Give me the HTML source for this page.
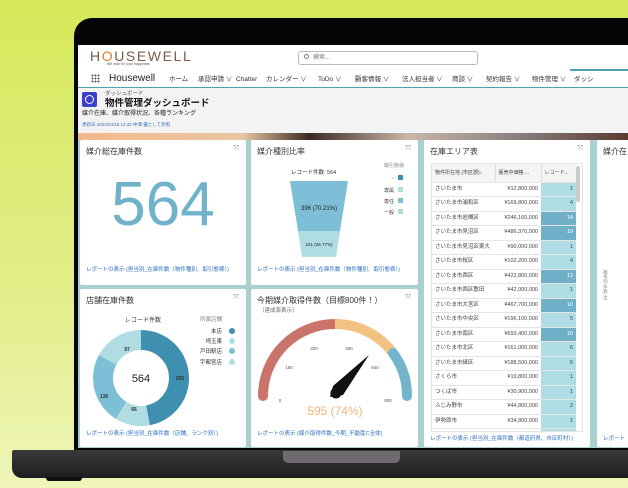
<!DOCTYPE html>
<html><head><meta charset="utf-8"><style>
*{margin:0;padding:0;box-sizing:border-box}
body{width:628px;height:488px;overflow:hidden;position:relative;font-family:"Liberation Sans","Noto Sans CJK JP",sans-serif;background:linear-gradient(180deg,#d6e85a 0%,#e2ee8a 60%,#eef5b8 100%)}
.a{position:absolute;line-height:1.2}
.card{position:absolute;background:#fff;border-radius:2px}
.ct{position:absolute;left:6px;top:7px;font-size:8px;color:#333;line-height:1.2}
.ex{position:absolute;right:7px;top:5px;font-size:7px;color:#888}
.lk{position:absolute;left:6px;font-size:5.5px;color:#2e6fc4;white-space:nowrap;line-height:1.2}
.nav span{position:absolute;top:76px;font-size:6.5px;line-height:8px;color:#333;white-space:nowrap}
table{border-collapse:collapse;font-size:5.5px;color:#444}
td{height:14.5px;border-bottom:1px solid #e4e4e4;padding:0 3px;white-space:nowrap}
</style></head><body>
<div class="a" style="left:74px;top:18px;width:580px;height:436px;background:#050505;border-radius:18px 0 0 0"></div>
<div class="a" style="left:12px;top:450px;width:616px;height:28px;background:linear-gradient(180deg,#3a3a3c,#1e1e20);border-radius:2px 0 0 10px"></div>
<div class="a" style="left:283px;top:451px;width:117px;height:12px;background:#6e6a70;border-radius:0 0 5px 5px"></div>
<div class="a" style="left:46px;top:477px;width:36px;height:4px;background:#111;border-radius:0 0 3px 3px"></div>
<div class="a" style="left:78px;top:45px;width:550px;height:403px;background:#a9cfcf;overflow:hidden"></div>
<div class="a" style="left:78px;top:45px;width:550px;height:43px;background:#fff"></div>
<div class="a" style="left:90px;top:48px;font-size:14px;letter-spacing:1.6px;color:#7b5a4c">H<span style="color:#e07a2c">O</span>USEWELL</div>
<div class="a" style="left:107px;top:62px;font-size:3.5px;color:#555">We wish for your happiness</div>
<div class="a" style="left:298px;top:51px;width:180px;height:14px;border:1px solid #bbb;border-radius:3px;font-size:6px;color:#777;padding:3px 0 0 14px">検索...</div>
<div class="a" style="left:304px;top:54px;width:5px;height:5px;border:1px solid #777;border-radius:50%"></div>
<div class="a" style="left:91px;top:74px;width:9px;height:9px;background-image:radial-gradient(circle,#555 0.9px,transparent 1.1px);background-size:3px 3px"></div>
<div class="a" style="left:109px;top:73px;font-size:10px;color:#222">Housewell</div>
<div class="nav">
<span style="left:169px">ホーム</span><span style="left:198px">承認申請 ∨</span><span style="left:236px">Chatter</span><span style="left:266px">カレンダー ∨</span><span style="left:318px">ToDo ∨</span><span style="left:355px">顧客情報 ∨</span><span style="left:402px">法人担当者 ∨</span><span style="left:452px">商談 ∨</span><span style="left:486px">契約報告 ∨</span><span style="left:532px">物件管理 ∨</span><span style="left:574px">ダッシ</span>
</div>
<div class="a" style="left:570px;top:69px;width:58px;height:2px;background:#4aa3b0"></div>
<div class="a" style="left:78px;top:87px;width:550px;height:1px;background:#4aa3b0"></div>
<div class="a" style="left:78px;top:88px;width:550px;height:45px;background:#f3f3f3"></div>
<div class="a" style="left:82px;top:92px;width:15px;height:15px;background:#3a3fcc;border-radius:2px"></div>
<div class="a" style="left:85px;top:95px;width:9px;height:9px;border:1.5px solid #fff;border-radius:50%"></div>
<div class="a" style="left:105px;top:91px;font-size:5.5px;color:#555">ダッシュボード</div>
<div class="a" style="left:105px;top:98px;font-size:9.5px;font-weight:bold;color:#111">物件管理ダッシュボード</div>
<div class="a" style="left:82px;top:111px;font-size:6px;color:#222">媒介在庫、媒介取得状況、各種ランキング</div>
<div class="a" style="left:82px;top:122px;font-size:4.5px;color:#3a6fc0">更新日 2024/04/18 14:32 中澤 優として参照</div>
<div class="a" style="left:78px;top:133px;width:550px;height:7px;background:linear-gradient(90deg,#f3b98a,#e8c6a4 30%,#3a2a22 42%,#c9b7a8 60%,#8a7f7f 80%,#5a3a30)"></div>
<div class="card" style="left:80px;top:140px;width:166px;height:145px">
<div class="ct">媒介総在庫件数</div><div class="ex">⤧</div>
<div class="a" style="left:0;width:166px;top:28px;text-align:center;font-size:62px;color:#6fb2c9">564</div>
<div class="lk" style="top:127px">レポートの表示 (担当別_在庫件数（物件種別、取引態様）)</div>
</div>
<div class="card" style="left:251px;top:140px;width:167px;height:145px">
<div class="ct">媒介種別比率</div><div class="ex">⤧</div>
<div class="a" style="left:40px;top:30px;font-size:5.5px;color:#333">レコード件数: 564</div>
<svg class="a" style="left:0;top:0" width="167" height="145">
<polygon points="39,41 97,41 89,91 47,91" fill="#7dbfd6"/>
<polygon points="47,91 89,91 85,117 51,117" fill="#afdde2"/>
<text x="68" y="70" font-size="6" fill="#222" text-anchor="middle" font-family="Liberation Sans">396 (70.21%)</text>
<text x="68" y="106" font-size="4.5" fill="#222" text-anchor="middle" font-family="Liberation Sans">151 (26.77%)</text>
<rect x="147" y="35" width="5" height="5" fill="#3e8fb0"/><rect x="147" y="47" width="5" height="5" fill="#afdde2"/><rect x="147" y="58" width="5" height="5" fill="#7dbfd6"/><rect x="147" y="69" width="5" height="5" fill="#afdde2"/>
<g font-size="5" fill="#444" font-family="Liberation Sans,Noto Sans CJK JP" text-anchor="end"><text x="153" y="27" fill="#888">取引態様</text><text x="143" y="40">-</text><text x="143" y="52">専属</text><text x="143" y="63">専任</text><text x="143" y="74">一般</text></g>
</svg>
<div class="lk" style="top:127px">レポートの表示 (担当別_在庫件数（物件種別、取引態様）)</div>
</div>
<div class="card" style="left:424px;top:140px;width:166px;height:307px">
<div class="ct">在庫エリア表</div><div class="ex">⤧</div>
<div class="a" style="left:7px;top:23px;width:152px;height:269px;overflow:hidden;border:1px solid #e4e4e4">
<table>
<tr style="background:#f4f4f4"><td style="width:63px;height:18px;font-size:5px">物件所在地 (市区郡)↓</td><td style="width:46px;font-size:5px;border-left:1px solid #ddd">販売中価格 ...</td><td style="width:35px;font-size:5px;border-left:1px solid #ddd">レコード...</td></tr>
<tr><td>さいたま市</td><td style="text-align:right">¥12,800,000</td><td style="background:#b0dde3;text-align:right">1</td></tr>
<tr><td>さいたま市浦和区</td><td style="text-align:right">¥169,800,000</td><td style="background:#b0dde3;text-align:right">4</td></tr>
<tr><td>さいたま市岩槻区</td><td style="text-align:right">¥246,160,000</td><td style="background:#6fb0c8;color:#fff;text-align:right">14</td></tr>
<tr><td>さいたま市見沼区</td><td style="text-align:right">¥486,370,000</td><td style="background:#6fb0c8;color:#fff;text-align:right">19</td></tr>
<tr><td>さいたま市見沼区東大</td><td style="text-align:right">¥90,000,000</td><td style="background:#b0dde3;text-align:right">1</td></tr>
<tr><td>さいたま市桜区</td><td style="text-align:right">¥102,200,000</td><td style="background:#b0dde3;text-align:right">4</td></tr>
<tr><td>さいたま市西区</td><td style="text-align:right">¥422,800,000</td><td style="background:#6fb0c8;color:#fff;text-align:right">13</td></tr>
<tr><td>さいたま市西区敷田</td><td style="text-align:right">¥42,000,000</td><td style="background:#b0dde3;text-align:right">1</td></tr>
<tr><td>さいたま市大宮区</td><td style="text-align:right">¥467,700,000</td><td style="background:#6fb0c8;color:#fff;text-align:right">10</td></tr>
<tr><td>さいたま市中央区</td><td style="text-align:right">¥196,100,000</td><td style="background:#b0dde3;text-align:right">5</td></tr>
<tr><td>さいたま市南区</td><td style="text-align:right">¥693,400,000</td><td style="background:#6fb0c8;color:#fff;text-align:right">10</td></tr>
<tr><td>さいたま市北区</td><td style="text-align:right">¥161,000,000</td><td style="background:#b0dde3;text-align:right">6</td></tr>
<tr><td>さいたま市緑区</td><td style="text-align:right">¥188,500,000</td><td style="background:#b0dde3;text-align:right">5</td></tr>
<tr><td>さくら市</td><td style="text-align:right">¥19,800,000</td><td style="background:#b0dde3;text-align:right">1</td></tr>
<tr><td>つくば市</td><td style="text-align:right">¥30,900,000</td><td style="background:#b0dde3;text-align:right">1</td></tr>
<tr><td>ふじみ野市</td><td style="text-align:right">¥44,800,000</td><td style="background:#b0dde3;text-align:right">2</td></tr>
<tr><td>伊勢原市</td><td style="text-align:right">¥34,800,000</td><td style="background:#b0dde3;text-align:right">1</td></tr>
<tr><td></td><td></td><td style="background:#b0dde3"></td></tr>
</table></div>
<div class="a" style="left:152px;top:26px;width:4px;height:36px;background:#ccc;border-radius:2px"></div>
<div class="lk" style="top:296px">レポートの表示 (担当別_在庫件数（都道府県、市区町村）)</div>
</div>
<div class="card" style="left:597px;top:140px;width:40px;height:307px">
<div class="ct">媒介在</div>
<div class="a" style="left:6px;top:130px;font-size:4.5px;color:#888;writing-mode:vertical-rl">都市別 件数 出</div>
<div class="lk" style="top:296px">レポート</div>
</div>
<div class="card" style="left:80px;top:289px;width:166px;height:158px">
<div class="ct">店舗在庫件数</div><div class="ex">⤧</div>
<div class="a" style="left:45px;top:29px;font-size:6px;color:#333">レコード件数</div>
<svg class="a" style="left:0;top:0" width="166" height="158">
<g transform="rotate(-90 61 89)" fill="none" stroke-width="20">
<circle cx="61" cy="89" r="38" stroke="#3f8fb0" stroke-dasharray="112.2 300"/>
<circle cx="61" cy="89" r="38" stroke="#afdde2" stroke-dasharray="27.9 300" stroke-dashoffset="-112.2"/>
<circle cx="61" cy="89" r="38" stroke="#7dbfd6" stroke-dasharray="57.6 300" stroke-dashoffset="-140.1"/>
<circle cx="61" cy="89" r="38" stroke="#afdde2" stroke-dasharray="41.1 300" stroke-dashoffset="-197.7"/>
</g>
<text x="61" y="93" font-size="11" text-anchor="middle" fill="#222" font-family="Liberation Sans">564</text>
<g font-size="5" fill="#333" font-family="Liberation Sans" text-anchor="middle" font-weight="bold"><text x="100" y="91">265</text><text x="54" y="122">66</text><text x="24" y="109">136</text><text x="47" y="62">97</text></g>
<g font-size="5.5" fill="#333" font-family="Liberation Sans,Noto Sans CJK JP" text-anchor="end"><text x="142" y="32" fill="#888">所属店舗</text><text x="142" y="44">本店</text><text x="142" y="54">埼玉東</text><text x="142" y="64">戸田駅店</text><text x="142" y="75">宇都宮店</text></g>
<circle cx="152" cy="42" r="3" fill="#3f8fb0"/><circle cx="152" cy="52" r="3" fill="#afdde2"/><circle cx="152" cy="62" r="3" fill="#7dbfd6"/><circle cx="152" cy="73" r="3" fill="#afdde2"/>
</svg>
<div class="lk" style="top:142px">レポートの表示 (担当別_在庫件数（店舗、ランク別）)</div>
</div>
<div class="card" style="left:251px;top:289px;width:167px;height:158px">
<div class="ct">今期媒介取得件数（目標800件！）</div><div class="ex">⤧</div>
<div class="a" style="left:8px;top:19px;font-size:5.5px;color:#666">（達成率表示）</div>
<svg class="a" style="left:0;top:0" width="167" height="158">
<g fill="none" stroke-width="10" stroke-linecap="round">
<path d="M12 107 A72 72 0 0 1 84 35" stroke="#c9736a"/>
<path d="M84 35 A72 72 0 0 1 142 64" stroke="#f2c283" stroke-linecap="butt"/>
<path d="M142 64 A72 72 0 0 1 156 107" stroke="#74b4cb"/>
</g>
<g font-size="4.5" fill="#555" font-family="Liberation Sans" text-anchor="middle"><text x="29" y="113">0</text><text x="38" y="80">160</text><text x="63" y="61">320</text><text x="98" y="61">480</text><text x="124" y="80">640</text><text x="137" y="113">800</text></g>
<path d="M79 108 L82 97 L118 66 L92 106 Z" fill="#111"/>
<circle cx="85" cy="104" r="5.5" fill="#111"/>
<text x="84" y="126" font-size="12" text-anchor="middle" fill="#f3b57a" font-family="Liberation Sans">595 (74%)</text>
</svg>
<div class="lk" style="top:142px">レポートの表示 (媒介取得件数_今期_不動産C全体)</div>
</div>
</body></html>
